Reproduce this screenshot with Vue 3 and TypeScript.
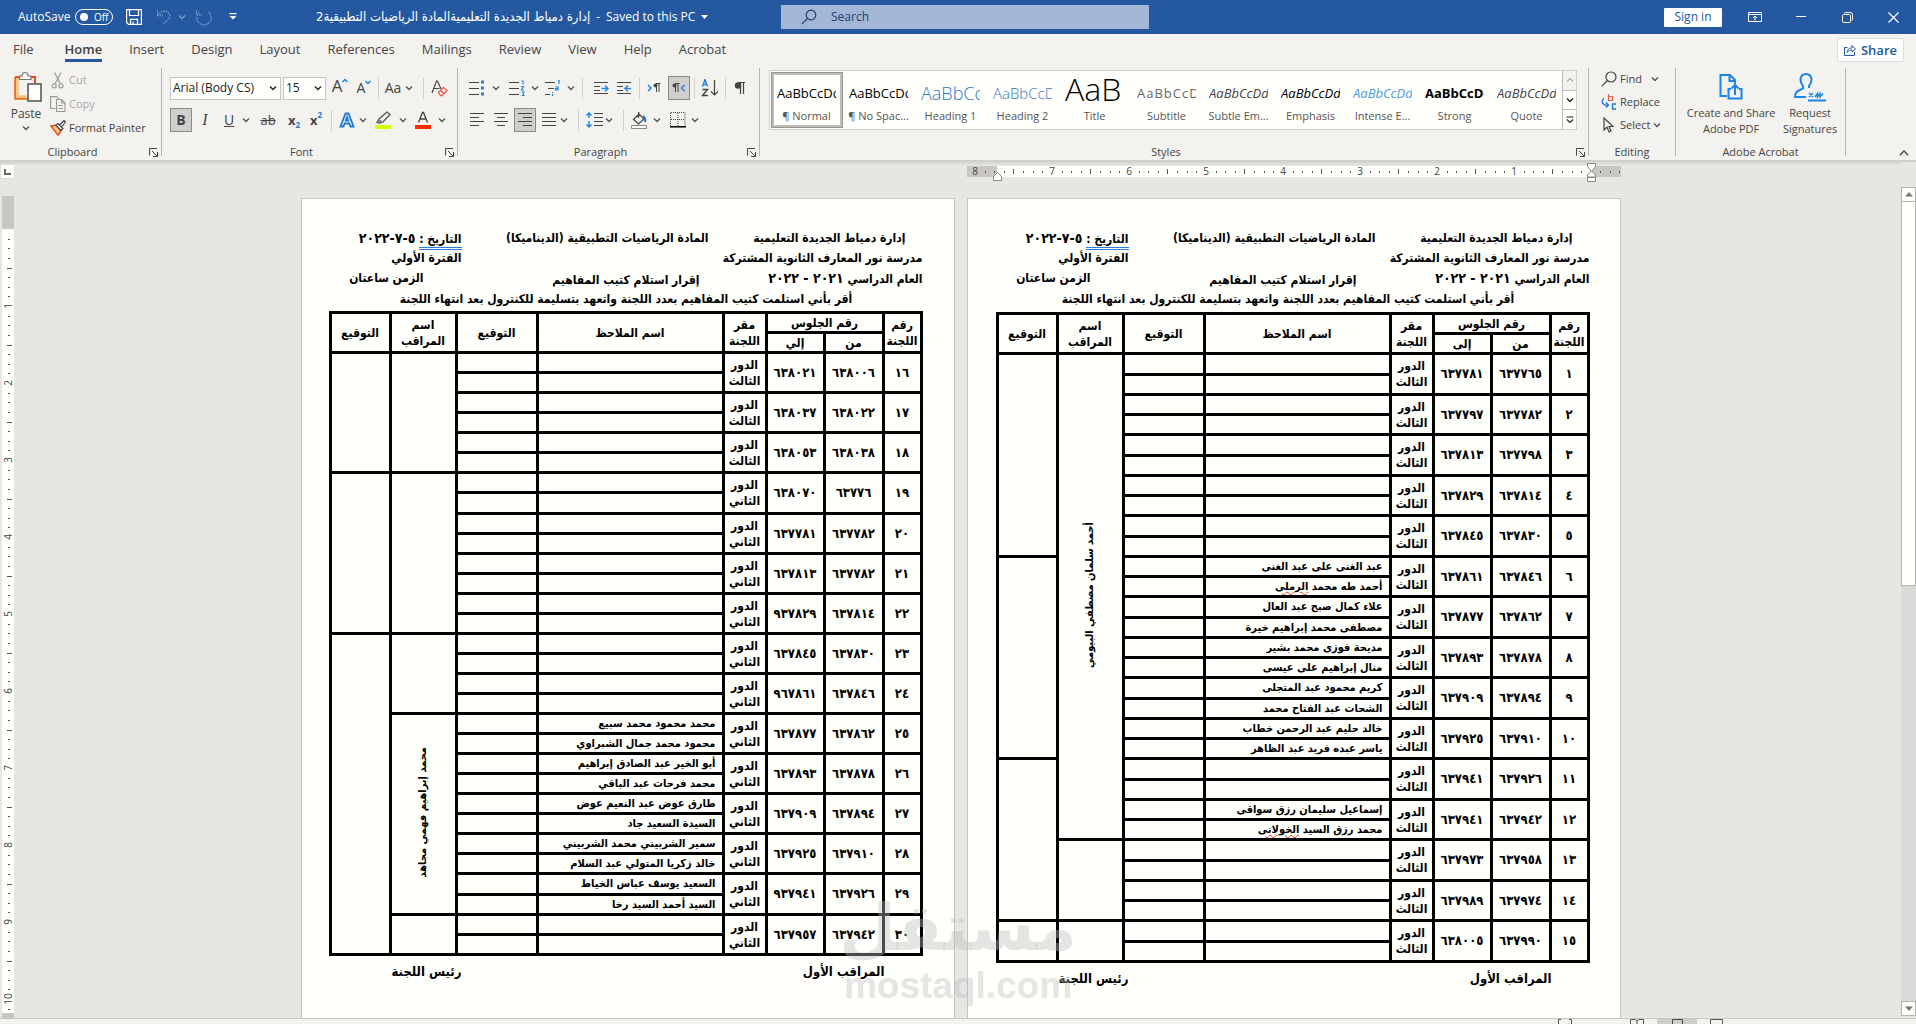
<script setup lang="ts">
interface Entry {
  no: number
  from: number
  to: number
  place: string
  names: [string, string]
  flagged?: string
}
interface Span {
  start: number
  rows: number
  label?: string
}
interface Sheet {
  id: string
  toLabel: string
  entries: Entry[]
  supervisors: Span[]
  signatures: Span[]
}

const THIRD = 'الثالث'
const SECOND = 'الثاني'

const entry = (no: number, from: number, to: number, place: string, a = '', b = '', flagged = ''): Entry => ({
  no, from, to, place, names: [a, b], flagged,
})

const sheets: Sheet[] = [
  {
    id: 'one',
    toLabel: 'إلى',
    entries: [
      entry(1, 637765, 637781, THIRD),
      entry(2, 637782, 637797, THIRD),
      entry(3, 637798, 637813, THIRD),
      entry(4, 637814, 637829, THIRD),
      entry(5, 637830, 637845, THIRD),
      entry(6, 637846, 637861, THIRD, 'عبد الغنى على عبد الغنى', 'أحمد طه محمد', 'الرملى'),
      entry(7, 637862, 637877, THIRD, 'علاء كمال صبح عبد العال', 'مصطفى محمد إبراهيم خيرة'),
      entry(8, 637878, 637893, THIRD, 'مديحة فوزى محمد بشير', 'منال إبراهيم على عيسى'),
      entry(9, 637894, 637909, THIRD, 'كريم محمود عبد المتجلى', 'الشحات عبد الفتاح محمد'),
      entry(10, 637910, 637925, THIRD, 'خالد حليم عبد الرحمن خطاب', 'ياسر عبده فريد عبد الظاهر'),
      entry(11, 637926, 637941, THIRD),
      entry(12, 637942, 637941, THIRD, 'إسماعيل سليمان رزق سواقى', 'محمد رزق السيد', 'الخولانى'),
      entry(13, 637958, 637973, THIRD),
      entry(14, 637974, 637989, THIRD),
      entry(15, 637990, 638005, THIRD),
    ],
    supervisors: [
      { start: 1, rows: 12, label: 'أحمد سلمان مصطفي البيومي' },
      { start: 13, rows: 2 },
      { start: 15, rows: 1 },
    ],
    signatures: [
      { start: 1, rows: 5 },
      { start: 6, rows: 5 },
      { start: 11, rows: 4 },
      { start: 15, rows: 1 },
    ],
  },
  {
    id: 'two',
    toLabel: 'إلي',
    entries: [
      entry(16, 638006, 638021, THIRD),
      entry(17, 638022, 638037, THIRD),
      entry(18, 638038, 638053, THIRD),
      entry(19, 63776, 638070, SECOND),
      entry(20, 637782, 637781, SECOND),
      entry(21, 637782, 637813, SECOND),
      entry(22, 637814, 937829, SECOND),
      entry(23, 637830, 637845, SECOND),
      entry(24, 637846, 967861, SECOND),
      entry(25, 637862, 637877, SECOND, 'محمد محمود محمد سبيع', 'محمود محمد جمال الشبراوي'),
      entry(26, 637878, 637893, SECOND, 'أبو الخير عبد الصادق إبراهيم', 'محمد فرحات عبد الباقي'),
      entry(27, 637894, 637909, SECOND, 'طارق عوض عبد النعيم عوض', 'السيدة السعيد جاد'),
      entry(28, 637910, 637925, SECOND, 'سمير الشربيني محمد الشربيني', 'خالد زكريا المتولي عبد السلام'),
      entry(29, 637926, 937941, SECOND, 'السعيد يوسف عباس الخياط', 'السيد أحمد السيد رخا'),
      entry(30, 637942, 637957, SECOND),
    ],
    supervisors: [
      { start: 16, rows: 3 },
      { start: 19, rows: 4 },
      { start: 23, rows: 2 },
      { start: 25, rows: 5, label: 'محمد إبراهيم فهمي مجاهد' },
      { start: 30, rows: 1 },
    ],
    signatures: [
      { start: 16, rows: 3 },
      { start: 19, rows: 4 },
      { start: 23, rows: 8 },
    ],
  },
]

const arabic = (n: number): string => String(n).replace(/\d/g, (d) => '٠١٢٣٤٥٦٧٨٩'[Number(d)])
const spanAt = (spans: Span[], no: number): Span | undefined => spans.find((s) => s.start === no)

const tabs: string[] = ['File', 'Home', 'Insert', 'Design', 'Layout', 'References', 'Mailings', 'Review', 'View', 'Help', 'Acrobat']

const styleItems: { name: string; sample: string; look: string }[] = [
  { name: '¶ Normal', sample: 'AaBbCcDd', look: 'plain' },
  { name: '¶ No Spac...', sample: 'AaBbCcDd', look: 'plain' },
  { name: 'Heading 1', sample: 'AaBbCc', look: 'h1' },
  { name: 'Heading 2', sample: 'AaBbCcD', look: 'h2' },
  { name: 'Title', sample: 'AaB', look: 'title' },
  { name: 'Subtitle', sample: 'AaBbCcD', look: 'sub' },
  { name: 'Subtle Em...', sample: 'AaBbCcDd', look: 'subtle' },
  { name: 'Emphasis', sample: 'AaBbCcDd', look: 'emph' },
  { name: 'Intense E...', sample: 'AaBbCcDd', look: 'intense' },
  { name: 'Strong', sample: 'AaBbCcDd', look: 'strong' },
  { name: 'Quote', sample: 'AaBbCcDd', look: 'subtle' },
]

/* Rulers: one inch is 77px, with a tick at every eighth. */
const INCH = 77
interface Tick { at: number; kind: 'dot' | 'half' | 'num'; label: string }
const makeTicks = (eighths: number): Tick[] =>
  Array.from({ length: eighths }, (_, i) => {
    const k = i + 1
    return {
      at: Math.round((k * INCH) / 8),
      kind: k % 8 === 0 ? 'num' : k % 4 === 0 ? 'half' : 'dot',
      label: String(k / 8),
    }
  })
const hTicks = makeTicks(64)
const vTicks = makeTicks(81)
</script>

<template>
  <div class="app">
    <svg class="defs" aria-hidden="true">
      <symbol id="chev" viewBox="0 0 8 8"><path d="M1 2.5 4 5.5 7 2.5" fill="none" stroke="currentColor" stroke-width="1.4" /></symbol>
      <symbol id="launch" viewBox="0 0 9 9"><path d="M.5 7.500V.5H8M3 3l5 5M8.500 4v4.500H4" fill="none" stroke="currentColor" /></symbol>
    </svg>

    <header class="titlebar">
      <div class="tb-left">
        <label class="autosave" for="autosave">AutoSave</label>
        <span class="toggle"><input id="autosave" type="checkbox" /><i></i><span>Off</span></span>
        <button class="tb-btn save" aria-label="Save">
          <svg width="16" height="16" viewBox="0 0 16 16" fill="none" stroke="#fff" stroke-width="1.2"><path d="M.6.6h14.800v14.800H2.600L.6 13.400zM3.500.6v5.900h9V.6M4.500 15.400v-5h7v5M7 15v-2.500" /></svg>
        </button>
        <button class="tb-btn undo" aria-label="Undo">
          <svg width="16" height="16" viewBox="0 0 16 16" fill="none" stroke="#7f9ccb" stroke-width="1.3" stroke-dasharray="1.500 1"><path d="M1.500 1v5.500H7M1.500 6.500C5 2 9 1 12 3.500s2 6-1 8L7.500 15" /></svg>
          <svg class="chev faint"><use href="#chev" /></svg>
        </button>
        <button class="tb-btn redo" aria-label="Repeat">
          <svg width="18" height="17" viewBox="0 0 18 17" fill="none" stroke="#7f9ccb" stroke-width="1.300" stroke-dasharray="1.500 1"><path d="M1.500 1v5H7M4 3.500A7.200 7.200 0 1 0 13.500 3" /></svg>
        </button>
        <button class="tb-btn custom" aria-label="Customize Quick Access Toolbar">
          <svg width="8" height="8" viewBox="0 0 8 8" fill="#fff"><path d="M.5 0h7v1.200h-7zM.5 3h7L4 6.500z" /></svg>
        </button>
      </div>
      <div class="doc-title">
        <bdi class="doc-name" dir="rtl" lang="ar">إدارة دمياط الجديدة التعليميةالمادة الرياضيات التطبيقية2</bdi>
        <span>-</span>
        <span>Saved to this PC</span>
        <svg width="7" height="5" viewBox="0 0 7 5" fill="#fff"><path d="M0 0h7L3.500 4z" /></svg>
      </div>
      <label class="search">
        <svg width="16" height="16" viewBox="0 0 16 16" fill="none" stroke="#1e3f75" stroke-width="1.200"><circle cx="10" cy="6" r="4.800" /><path d="M6.500 9.500.8 15.200" /></svg>
        <input type="text" placeholder="Search" aria-label="Search" />
      </label>
      <div class="tb-right">
        <button class="signin">Sign in</button>
        <button class="win" aria-label="Ribbon Display Options">
          <svg width="14" height="12" viewBox="0 0 14 12" fill="none" stroke="#fff"><path d="M.5 1.500h13v9H.5zM.5 3.500h13M7 9.500V5M5 7l2-2 2 2" /></svg>
        </button>
        <button class="win" aria-label="Minimize"><svg width="12" height="12" viewBox="0 0 12 12" stroke="#fff"><path d="M1 5.500h10" /></svg></button>
        <button class="win" aria-label="Restore Down">
          <svg width="11" height="11" viewBox="0 0 11 11" fill="none" stroke="#fff"><rect x=".5" y="2.500" width="8" height="8" rx="1" /><path d="M2.500 2V1.500q0-1 1-1h5q2 0 2 2v5q0 1-1 1" /></svg>
        </button>
        <button class="win" aria-label="Close"><svg width="11" height="11" viewBox="0 0 11 11" stroke="#fff" stroke-width="1.200"><path d="m.5.5 10 10m0-10-10 10" /></svg></button>
      </div>
    </header>

    <nav class="tabs">
      <a v-for="t in tabs" :key="t" href="#" :class="{ on: t === 'Home' }">{{ t }}</a>
      <button class="share">
        <svg width="12" height="12" viewBox="0 0 12 12" fill="none" stroke="#2458a0"><path d="M3.500 3.500h-3v8h10V8M3 8.500C3.500 5 5.500 4 8 4V1.500L11.500 5 8 8V6C6 6 4.500 6.500 3 8.500z" /></svg>
        Share
      </button>
    </nav>

    <section class="ribbon">
      <div class="group clipboard">
        <div class="body clip-body">
          <button class="big paste">
            <svg width="28" height="32" viewBox="0 0 28 32" fill="none"><path d="M1.200 6v21.800h12" stroke="#e8701a" stroke-width="2" /><path d="M3.500 7v18.500h9" stroke="#f6c278" stroke-width="2.500" /><path d="M1 6h6M15 6h6v6" stroke="#e8501a" stroke-width="2" /><path d="M5.500 8.500V5H8q0-3.500 3-3.500T14 5h3v3.500z" fill="#f8f8f5" stroke="#777" stroke-width="1.200" /><rect x="14" y="13" width="13" height="17" fill="#fffefb" stroke="#444" stroke-width="1.400" /></svg>
            <span>Paste</span>
            <svg class="chev"><use href="#chev" /></svg>
          </button>
          <div class="clip-list">
            <button class="off">
              <svg width="16" height="17" viewBox="0 0 16 17" fill="none" stroke="#a3a19e" stroke-width="1.300"><path d="M4.500.5 10.500 12M11 .5 5 12" /><circle cx="4.200" cy="13.800" r="2" /><circle cx="11" cy="13.800" r="2" /></svg>Cut
            </button>
            <button class="off">
              <svg width="16" height="16" viewBox="0 0 16 16" fill="none" stroke="#9a9895" stroke-width="1.100"><path d="M5.500 12.500H.6V.6h6l2.500 2.500M6.500 3.500h5l3.500 3.500v8.500H6.500zM11.500 3.500V7H15M8.500 9.500H13M8.500 12.500H13" /></svg>Copy
            </button>
            <button>
              <svg width="16" height="16" viewBox="0 0 16 16" fill="none"><path d="m1 6 5-1 5 6-3 4z" fill="#fbc98c" stroke="#e8501a" stroke-width="1.500" /><path d="m6 5.500 2-2 5 5-2 2zM9.500 5l4.500-4.500 1.500 1.500L11.500 7" fill="#f3f2ee" stroke="#444" stroke-width="1.200" /></svg>Format Painter
            </button>
          </div>
        </div>
        <div class="label"><span>Clipboard</span><button class="launch" aria-label="Clipboard settings"><svg><use href="#launch" /></svg></button></div>
      </div>

      <div class="group font">
        <div class="body rows">
          <div class="row f1">
            <div class="combo"><input type="text" value="Arial (Body CS)" aria-label="Font" /><svg class="chev dark"><use href="#chev" /></svg></div>
            <div class="combo"><input type="text" value="15" aria-label="Font size" /><svg class="chev dark"><use href="#chev" /></svg></div>
            <button class="grow" aria-label="Grow Font"><span>A</span><svg width="6" height="5" viewBox="0 0 6 5"><path d="M.5 4 3 1.500 5.500 4" /></svg></button>
            <button class="grow shrink" aria-label="Shrink Font"><span>A</span><svg width="6" height="5" viewBox="0 0 6 5"><path d="M.5 1 3 3.500 5.500 1" /></svg></button>
            <i class="sep"></i>
            <button class="glyph">Aa</button>
            <svg class="chev"><use href="#chev" /></svg>
            <i class="sep"></i>
            <button aria-label="Clear All Formatting"><svg width="17" height="17" viewBox="0 0 17 17" fill="none"><path d="M1 13 5.500 1h1L10 9M3 8.500h5.500" stroke="#444" stroke-width="1.200" /><path d="m7.500 12.500 5-5 3.500 3-5 5h-1.500zM9.500 10.500l3.500 3" stroke="#e0614a" stroke-width="1.300" /></svg></button>
          </div>
          <div class="row f2">
            <button class="glyph pressed"><b>B</b></button>
            <button class="glyph serif"><i>I</i></button>
            <button class="glyph"><u>U</u></button>
            <svg class="chev"><use href="#chev" /></svg>
            <button class="glyph small"><s>ab</s></button>
            <button class="glyph small"><b>x</b><sub>2</sub></button>
            <button class="glyph small"><b>x</b><sup>2</sup></button>
            <i class="sep"></i>
            <button aria-label="Text Effects"><svg width="16" height="16" viewBox="0 0 16 16" fill="none"><path d="m1.500 14.500 5-13h3l5 13h-3l-1.200-3H5.700l-1.200 3zM6.800 8.500h2.400L8 5z" stroke="#1a78d8" stroke-width="1.800" /></svg></button>
            <svg class="chev"><use href="#chev" /></svg>
            <button aria-label="Text Highlight Color"><svg width="18" height="18" viewBox="0 0 18 18" fill="none"><path d="M3 11.500 5 8l8-7 3 2.500-7 7.500-3.500 1z" stroke="#555" stroke-width="1.300" /><path d="m5 8 4 3-3.500 1.500L3 11.500z" fill="#777" /><path d="M1 14h16v4H1z" fill="#d2ff00" /></svg></button>
            <svg class="chev"><use href="#chev" /></svg>
            <button aria-label="Font Color"><svg width="18" height="18" viewBox="0 0 18 18" fill="none"><path d="m4.500 11.500 4-10h1l4 10M6 8h6" stroke="#444" stroke-width="1.300" /><path d="M1 14h16v4H1z" fill="#ff2a00" /></svg></button>
            <svg class="chev"><use href="#chev" /></svg>
          </div>
        </div>
        <div class="label"><span>Font</span><button class="launch" aria-label="Font settings"><svg><use href="#launch" /></svg></button></div>
      </div>

      <div class="group paragraph">
        <div class="body rows">
          <div class="row p1">
            <button aria-label="Bullets"><svg width="16" height="16" viewBox="0 0 16 16"><path d="M0 2.500h10M0 8.500h10M0 14.500h10" stroke="#444" /><path d="M12 .5h3v3h-3zM12 6.500h3v3h-3zM12 12.500h3v3h-3z" fill="#1a86e8" /></svg></button>
            <svg class="chev"><use href="#chev" /></svg>
            <button aria-label="Numbering"><svg width="16" height="16" viewBox="0 0 16 16" fill="none"><path d="M0 2.500h10M0 8.500h10M0 14.500h10" stroke="#444" /><path d="M12.500 1H14v3.500M12 6.500h2.500L12.500 10H15M12.500 12H15l-1 1.500 1 2h-2.500" stroke="#1a86e8" stroke-width="1.100" /></svg></button>
            <svg class="chev"><use href="#chev" /></svg>
            <button aria-label="Multilevel List"><svg width="16" height="16" viewBox="0 0 16 16" fill="none"><path d="M0 2.500h10M3 8.500h6M0 14.500h5" stroke="#444" /><path d="M13 .5h1V4M10.500 7h2.500v3h-2.500V8.500H13M7.500 12v1M7.500 14v2.500" stroke="#1a86e8" stroke-width="1.200" /></svg></button>
            <svg class="chev"><use href="#chev" /></svg>
            <i class="sep"></i>
            <button aria-label="Decrease Indent"><svg width="16" height="14" viewBox="0 0 16 14" fill="none"><path d="M1 1.500h14M1 5.500h6M1 9.500h6M1 12.500h14" stroke="#444" /><path d="M8.500 7.500h6M12 4.500l3 3-3 3" stroke="#1a86e8" stroke-width="1.400" /></svg></button>
            <button aria-label="Increase Indent"><svg width="16" height="14" viewBox="0 0 16 14" fill="none"><path d="M1 1.500h14M1 5.500h6M1 9.500h6M1 12.500h14" stroke="#444" /><path d="M9 7.500h6M12 4.500l-3 3 3 3" stroke="#1a86e8" stroke-width="1.400" /></svg></button>
            <i class="sep"></i>
            <button aria-label="Left-to-Right"><svg width="14" height="12" viewBox="0 0 14 12" fill="none"><path d="m1 3 3 3-3 3" stroke="#1a86e8" stroke-width="1.500" /><path d="M9 1.500h4.500M9.500 1.500V10M12 1.500V10" stroke="#444" /><circle cx="8.500" cy="3.500" r="2" fill="#444" /></svg></button>
            <button class="pressed" aria-label="Right-to-Left"><svg width="14" height="12" viewBox="0 0 14 12" fill="none"><path d="m12.500 3-3 3 3 3" stroke="#1a86e8" stroke-width="1.500" /><path d="M3 1.500h4.500M3.500 1.500V10M6 1.500V10" stroke="#444" /><circle cx="2.500" cy="3.500" r="2" fill="#444" /></svg></button>
            <i class="sep"></i>
            <button aria-label="Sort"><svg width="18" height="18" viewBox="0 0 18 18" fill="none"><path d="m1.500 7.500 2.500-7 2.500 7M2.500 5.500h3" stroke="#1a86e8" stroke-width="1.400" /><path d="M1.500 10.500h5l-5 6h5.500" stroke="#444" stroke-width="1.400" /><path d="M13.500 1v15M10 12.500l3.500 3.500 3.500-3.500" stroke="#444" stroke-width="1.200" /></svg></button>
            <i class="sep"></i>
            <button aria-label="Show marks"><svg width="12" height="14" viewBox="0 0 12 14" fill="none"><path d="M4 1.500h7M6.500 1.500V13M9.500 1.500V13" stroke="#444" stroke-width="1.200" /><circle cx="4" cy="4.500" r="3.200" fill="#444" /></svg></button>
          </div>
          <div class="row p2">
            <button aria-label="Align Left"><svg width="14" height="14" viewBox="0 0 14 14" stroke="#444"><path d="M0 .5h14M0 4.500h9M0 8.500h14M0 12.500h9" /></svg></button>
            <button aria-label="Center"><svg width="14" height="14" viewBox="0 0 14 14" stroke="#444"><path d="M0 .5h14M3 4.500h8M0 8.500h14M3 12.500h8" /></svg></button>
            <button class="pressed" aria-label="Align Right"><svg width="14" height="14" viewBox="0 0 14 14" stroke="#444"><path d="M0 .5h14M5 4.500h9M0 8.500h14M5 12.500h9" /></svg></button>
            <button aria-label="Justify"><svg width="14" height="14" viewBox="0 0 14 14" stroke="#444"><path d="M0 .5h14M0 4.500h14M0 8.500h14M0 12.500h14" /></svg></button>
            <svg class="chev"><use href="#chev" /></svg>
            <i class="sep"></i>
            <button aria-label="Line Spacing"><svg width="17" height="16" viewBox="0 0 17 16" fill="none"><path d="M8 1.500h9M8 5.500h9M8 9.500h9M8 13.500h9" stroke="#444" /><path d="M3 1v5M3 9v6M.5 3.500 3 1l2.500 2.500M.5 12.500 3 15l2.500-2.500" stroke="#1a86e8" stroke-width="1.400" /></svg></button>
            <svg class="chev"><use href="#chev" /></svg>
            <i class="sep"></i>
            <button aria-label="Shading"><svg width="18" height="17" viewBox="0 0 18 17" fill="none"><path d="M3.500 7.500 9 2l5 5-5.500 5zM8.500 6V1q0-1 1-1" stroke="#444" stroke-width="1.200" /><path d="M13 4q3 2 2 6" stroke="#1a78d8" stroke-width="2" /><path d="M1.500 13.500h15v3h-15z" fill="#fff" stroke="#888" /></svg></button>
            <svg class="chev"><use href="#chev" /></svg>
            <button aria-label="Borders"><svg width="16" height="16" viewBox="0 0 16 16" fill="none"><path d="M.5 14V.5h14.500V14M8 1v13M1 7.500h14" stroke="#444" stroke-dasharray="1 1" /><path d="M0 14.800h16" stroke="#000" stroke-width="1.500" /></svg></button>
            <svg class="chev"><use href="#chev" /></svg>
          </div>
        </div>
        <div class="label"><span>Paragraph</span><button class="launch" aria-label="Paragraph settings"><svg><use href="#launch" /></svg></button></div>
      </div>

      <div class="group styles">
        <div class="body">
          <div class="gallery">
            <div class="gallery-items">
              <button v-for="(s, i) in styleItems" :key="s.name" class="style-item" :class="{ chosen: i === 0 }">
                <span class="sample" :class="s.look">{{ s.sample }}</span>
                <span class="style-name">{{ s.name }}</span>
              </button>
            </div>
            <div class="gallery-nav">
              <button class="dim" aria-label="Previous styles"><svg class="chev up"><use href="#chev" /></svg></button>
              <button aria-label="Next styles"><svg class="chev dark"><use href="#chev" /></svg></button>
              <button aria-label="More styles"><svg width="8" height="8" viewBox="0 0 8 8" fill="none" stroke="#222" stroke-width="1.200"><path d="M.5 1h7M1 3.500 4 6.500 7 3.500" /></svg></button>
            </div>
          </div>
        </div>
        <div class="label"><span>Styles</span><button class="launch" aria-label="Styles settings"><svg><use href="#launch" /></svg></button></div>
      </div>

      <div class="group editing">
        <div class="body edit-list">
          <button><svg width="16" height="16" viewBox="0 0 16 16" fill="none" stroke="#444" stroke-width="1.200"><circle cx="10" cy="6" r="5" /><path d="M6.500 9.500.8 15.200" /></svg>Find<svg class="chev far"><use href="#chev" /></svg></button>
          <button><svg width="16" height="16" viewBox="0 0 16 16" fill="none"><path d="M7.500 0v6.500h4v-4h-4" stroke="#e0614a" stroke-width="1.200" /><path d="M3 4.500Q0 7 2 9.500T7 11M5 8.500 7.500 11 5 13.500M15 10h-3.500v5H15" stroke="#1a78d8" stroke-width="1.300" /></svg>Replace</button>
          <button><svg width="16" height="16" viewBox="0 0 16 16" fill="none" stroke="#444" stroke-width="1.200"><path d="M3 1v12l3-3 2 5 2-1-2-4.500h4z" /></svg>Select<svg class="chev"><use href="#chev" /></svg></button>
        </div>
        <div class="label"><span>Editing</span></div>
      </div>

      <div class="group acrobat">
        <div class="body acro-body">
          <button class="big">
            <svg width="24" height="28" viewBox="0 0 24 28" fill="none" stroke="#1a86e8" stroke-width="2"><path d="M8 23H1.500V2H11l5 5v4M10.500 2v6H16M12 16h-2.500v9.500h13V16H20M16 22v-9M12.500 15.500 16 12l3.500 3.500" /></svg>
            <span>Create and Share<br />Adobe PDF</span>
          </button>
          <button class="big">
            <svg width="32" height="30" viewBox="0 0 32 30" fill="none" stroke="#1a86e8" stroke-width="2"><path d="M12 25H1q0-5 4-6.500l4-2v-2.500Q6.500 11 6.500 7.500 7 2 12 2t5.500 5.500q0 3.500-2.500 6.500v2M14 28.500h18" /><path d="m15 21 4 4m0-4-4 4M21 25l2.500-3.500v3.500L26 21.500V25l3-3.500" stroke-width="1.500" /></svg>
            <span>Request<br />Signatures</span>
          </button>
        </div>
        <div class="label"><span>Adobe Acrobat</span></div>
      </div>
      <div class="ribbon-end">
        <button aria-label="Collapse the Ribbon"><svg width="10" height="6" viewBox="0 0 10 6" fill="none" stroke="#444" stroke-width="1.300"><path d="M.8 5.200 5 1l4.200 4.200" /></svg></button>
      </div>
    </section>

    <main class="workspace">
      <aside class="left-rail">
        <button class="tab-kind" aria-label="Tab selector"><svg width="7" height="6" viewBox="0 0 7 6"><path d="M1 0v5h6" fill="none" stroke="#666" stroke-width="2" /></svg></button>
        <svg class="v-ruler" width="12" height="823">
          <rect width="12" height="33" fill="#c8c7c3" /><rect y="33" width="12" height="784" fill="#fffffc" /><rect y="817" width="12" height="6" fill="#c8c7c3" />
          <template v-for="t in vTicks" :key="t.at">
            <path v-if="t.kind !== 'num'" :d="t.kind === 'half' ? `M5 ${t.at + 33}.5h5` : `M6 ${t.at + 33}.5h2`" stroke="#555" />
            <text v-else :transform="`translate(10 ${t.at + 33}) rotate(-90)`" text-anchor="middle">{{ t.label }}</text>
          </template>
        </svg>
      </aside>

      <div class="canvas">
        <div class="ruler-line">
          <svg class="h-ruler" width="654" height="20">
            <rect y="4" width="654" height="11" fill="#c8c7c3" /><rect x="30" y="4" width="594" height="11" fill="#fffffc" />
            <template v-for="t in hTicks" :key="t.at">
              <path v-if="t.kind !== 'num'" :d="t.kind === 'half' ? `M${624 - t.at}.5 7v5` : `M${624 - t.at}.5 9v2`" stroke="#555" />
              <text v-else :x="624 - t.at" y="13" text-anchor="middle">{{ t.label }}</text>
            </template>
            <path d="M633.500 9v2M643.500 9v2M652.500 9v2" stroke="#555" />
            <g fill="#fff" stroke="#888"><path d="M26.500 18.500v-4l4-4 4 4v4zM620.500 1.500h8v3l-4 5-4-5zM620.500 15v-2l4-4 4 4v2zM620.500 15.500h8v4h-8z" /></g>
          </svg>
        </div>
        <div class="pages" dir="rtl" lang="ar">
          <article v-for="sheet in sheets" :key="sheet.id" class="page" :class="sheet.id">
            <div class="heading">
              <p class="in-a">إدارة دمياط الجديدة التعليمية</p>
              <p>المادة الرياضيات التطبيقية (الديناميكا)</p>
              <p><span class="grammar">التاريخ :</span> <span class="digits">٥-٧-٢٠٢٢</span></p>
              <p class="wide">مدرسة نور المعارف الثانوية المشتركة</p>
              <p>الفترة الأولي</p>
              <p>العام الدراسي <span class="digits">٢٠٢١ - ٢٠٢٢</span></p>
              <p class="receipt">إقرار استلام كتيب المفاهيم</p>
              <p class="in-c">الزمن ساعتان</p>
            </div>
            <p class="pledge">أقر بأني استلمت كتيب المفاهيم بعدد اللجنة واتعهد بتسليمة للكنترول بعد انتهاء اللجنة</p>
            <table>
              <colgroup><col class="c1" /><col class="c2" /><col class="c3" /><col class="c4" /><col class="c5" /><col class="c6" /><col class="c7" /><col class="c8" /></colgroup>
              <thead>
                <tr>
                  <th rowspan="2">رقم اللجنة</th>
                  <th colspan="2">رقم الجلوس</th>
                  <th rowspan="2">مقر اللجنة</th>
                  <th rowspan="2">اسم الملاحظ</th>
                  <th rowspan="2">التوقيع</th>
                  <th rowspan="2">اسم المراقب</th>
                  <th rowspan="2">التوقيع</th>
                </tr>
                <tr><th>من</th><th>{{ sheet.toLabel }}</th></tr>
              </thead>
              <tbody>
                <template v-for="e in sheet.entries" :key="e.no">
                  <tr>
                    <td class="digits" rowspan="2">{{ arabic(e.no) }}</td>
                    <td class="digits" rowspan="2">{{ arabic(e.from) }}</td>
                    <td class="digits" rowspan="2">{{ arabic(e.to) }}</td>
                    <td rowspan="2">الدور {{ e.place }}</td>
                    <td class="name">{{ e.names[0] }}</td>
                    <td></td>
                    <td v-if="spanAt(sheet.supervisors, e.no)" :rowspan="spanAt(sheet.supervisors, e.no)!.rows * 2">
                      <span class="upright">{{ spanAt(sheet.supervisors, e.no)!.label }}</span>
                    </td>
                    <td v-if="spanAt(sheet.signatures, e.no)" :rowspan="spanAt(sheet.signatures, e.no)!.rows * 2"></td>
                  </tr>
                  <tr>
                    <td class="name">{{ e.names[1] }} <span v-if="e.flagged" class="spelling">{{ e.flagged }}</span></td>
                    <td></td>
                  </tr>
                </template>
              </tbody>
            </table>
            <div class="signers"><span>المراقب الأول</span><span>رئيس اللجنة</span></div>
          </article>
        </div>
        <div class="watermark" aria-hidden="true"><span class="wm-ar" lang="ar">مستقل</span><span class="wm-en">mostaql.com</span></div>
      </div>

      <div class="scrollbar">
        <button aria-label="Scroll up"><svg width="8" height="5" viewBox="0 0 8 5" fill="#777"><path d="M0 4.500h8L4 0z" /></svg></button>
        <div class="thumb"></div>
        <div class="track"></div>
        <button aria-label="Scroll down"><svg width="8" height="5" viewBox="0 0 8 5" fill="#777"><path d="M0 .5h8L4 5z" /></svg></button>
      </div>
    </main>

    <footer class="status">
      <svg class="focus" width="14" height="5" viewBox="0 0 14 5" fill="none" stroke="#555"><path d="M.5 5V.5H3M11 .5h2.500V5" /></svg>
      <svg class="read" width="14" height="5" viewBox="0 0 14 5" fill="none" stroke="#555"><path d="M.5 5V.5h5L7 2 8.500.5h5V5M7 2v3" /></svg>
      <span class="current"><svg width="11" height="5" viewBox="0 0 11 5" fill="none" stroke="#444"><path d="M.5 5V.5h10V5" /></svg></span>
      <svg class="web" width="13" height="5" viewBox="0 0 13 5" fill="none" stroke="#555"><path d="M.5 5V.5h12V5" /></svg>
    </footer>
  </div>
</template>

<style>
body { margin: 0; overflow: hidden; }
</style>

<style scoped>
.app { height: 100vh; display: flex; flex-direction: column; overflow: hidden; background: #e6e6e2; color: #444; font: 12px/16px "Open Sans", "Noto Sans", sans-serif; }
.app *, .app *::before { box-sizing: border-box; }
.defs { position: absolute; width: 0; height: 0; }
button { font: inherit; color: inherit; background: none; border: 0; padding: 0; margin: 0; display: flex; align-items: center; justify-content: center; white-space: nowrap; }
input { font: inherit; color: inherit; border: 0; padding: 0; margin: 0; background: none; outline: 0; min-width: 0; }
p { margin: 0; }
svg { display: block; flex: none; }
.chev { width: 8px; height: 8px; color: #555; }
.chev.dark { color: #222; }
.chev.up { transform: rotate(180deg); color: #b5b3b0; }
.chev.faint { color: #7f9ccb; }

.titlebar { flex: none; height: 34px; display: grid; grid-template-columns: 316px 465px 368px 1fr; align-items: center; background: #2458a0; color: #fff; }
.titlebar > * { min-width: 0; }
.tb-left { display: flex; align-items: center; padding-left: 18px; }
.autosave { width: 57px; }
.toggle { position: relative; display: flex; align-items: center; width: 38px; height: 16px; border: 1px solid #fff; border-radius: 8px; font-size: 10px; line-height: 14px; }
.toggle input { position: absolute; inset: 0; opacity: 0; }
.toggle i { width: 8px; height: 8px; margin: 0 6px 0 4px; border-radius: 50%; background: #fff; }
.save { margin-left: 13px; }
.undo { margin-left: 14px; gap: 6px; }
.redo { margin-left: 9px; }
.custom { margin-left: 16px; }
.doc-title { display: flex; align-items: center; gap: 6px; white-space: nowrap; }
.doc-name { font: 13px/18px "DejaVu Sans Condensed", "DejaVu Sans", sans-serif; }
.search { display: flex; align-items: center; height: 24px; padding-left: 20px; gap: 14px; background: #a2b7d5; }
.search input { flex: 1; color: #1e3f75; }
.search input::placeholder { color: #1e3f75; opacity: 1; }
.tb-right { display: flex; align-items: center; justify-content: flex-end; }
.signin { width: 58px; height: 19px; margin-right: 10px; background: #fff; color: #2458a0; border-radius: 1px; }
.win { width: 46px; height: 34px; }

.tabs { flex: none; display: flex; align-items: flex-start; height: 34px; background: #f3f2ee; font-size: 13px; }
.tabs a { padding: 7px 14px 0 13px; color: #444; text-decoration: none; }
.tabs a:first-child { margin-right: 4px; }
.tabs a.on { font-weight: 600; padding: 7px 0 0; margin: 0 14px 0 13px; height: 28px; border-bottom: 3px solid #2458a0; }
.share { margin: 4px 12px 0 auto; width: 67px; height: 24px; gap: 5px; border: 1px solid #dddcd8; border-radius: 2px; background: #fff; color: #2458a0; font-weight: 600; }

.ribbon { flex: none; display: flex; height: 94px; background: #f3f2ee; border-bottom: 2px solid #d0cfcb; }
.group { flex: none; display: flex; flex-direction: column; height: 88px; border-right: 1px solid #b9b7b3; }
.body { flex: 1; min-height: 0; }
.label { display: flex; align-items: center; height: 12px; margin-bottom: -2px; line-height: 12px; font-size: 11px; }
.label span { flex: 1; text-align: center; }
.launch { width: 9px; height: 9px; margin: 0 3px 0 4px; }
.launch svg { width: 9px; height: 9px; }
.clipboard { width: 162px; }
.clip-body { display: flex; padding: 3px 0 0 8px; font-size: 11px; }
.big { flex-direction: column; justify-content: flex-start; text-align: center; }
.paste { width: 36px; font-size: 12px; }
.paste span { margin: 3px 0 2px; }
.paste > svg:first-child { margin-left: 4px; }
.clip-list { display: flex; flex-direction: column; margin: -3px 0 0 6px; }
.clip-list button { height: 24px; justify-content: flex-start; gap: 3px; }
.off { color: #a8a6a3; }
.font { width: 296px; }
.font .body { padding-left: 7px; }
.paragraph { width: 302px; }
.paragraph .body { padding-left: 5px; }
.rows { display: flex; flex-direction: column; gap: 8px; padding-top: 8px; }
.row { display: grid; height: 24px; align-items: center; justify-items: center; justify-content: start; }
.row button { height: 24px; }
.f1 { grid-template-columns: 113px 43px 28px 20px 8px 22px 10px 18px 14px; padding-left: 1px; }
.f2 { grid-template-columns: 24px 24px 24px 10px 34px 18px 26px 4px 28px 4px 36px 4px 36px 2px; }
.p1 { grid-template-columns: 28px 10px 32px 4px 32px 4px 18px 20px 26px 4px 26px 24px 6px 26px 4px 26px; }
.p2 { grid-template-columns: 28px 20px 28px 20px 10px 18px 14px 16px 12px 20px 16px 26px 8px; }
.sep { width: 1px; height: 21px; background: #d2d0cc; }
.combo { display: flex; align-items: center; justify-self: start; width: 111px; height: 23px; padding: 0 3px 0 2px; border: 1px solid #c6c5c1; background: #fffffc; color: #222; }
.combo + .combo { width: 43px; }
.combo input { flex: 1; width: 0; }
.row .pressed { width: 22px; border: 1px solid #8b8a87; background: #cfcecb; }
.glyph { font-size: 14px; }
.glyph.small { font-size: 13px; }
.serif { font-family: "Liberation Serif", serif; font-size: 16px; }
.glyph sub, .glyph sup { font-size: 8px; line-height: 8px; color: #1a78d8; font-weight: 700; vertical-align: baseline; }
.glyph sub { align-self: flex-end; margin-bottom: 3px; }
.glyph sup { align-self: flex-start; margin-top: 3px; }
.grow { font-size: 17px; align-items: flex-start; padding-top: 2px; }
.shrink { font-size: 14px; padding-top: 4px; }
.grow svg { fill: none; stroke: #1a86e8; stroke-width: 1.4; }

.styles { flex: 1; min-width: 0; }
.styles .body { padding: 2px 11px 0 9px; }
.gallery { display: flex; height: 60px; border: 1px solid #cfcecb; background: #fffffc; }
.gallery-items { flex: 1; display: flex; min-width: 0; overflow: hidden; padding: 1px; }
.style-item { flex: none; width: 72px; height: 56px; flex-direction: column; justify-content: flex-start; overflow: hidden; border: 3px solid transparent; padding: 3px 4px 0 3px; }
.style-item.chosen { border-color: #bdbcb9; outline: 1px solid #979693; outline-offset: -1px; }
.sample { display: block; width: 100%; height: 30px; line-height: 30px; overflow: hidden; text-align: left; color: #000; font-size: 13px; }
.sample.h1 { color: #2e78c8; font-size: 18px; font-weight: 300; }
.sample.h2 { color: #2e78c8; font-size: 15px; font-weight: 300; }
.sample.title { font-size: 32px; line-height: 22px; font-weight: 300; }
.sample.sub { color: #666; letter-spacing: 1px; }
.sample.subtle { color: #444; font-style: italic; }
.sample.emph { font-style: italic; }
.sample.intense { color: #4aa0e0; font-style: italic; }
.sample.strong { font-weight: 700; }
.style-name { line-height: 18px; color: #555; font-size: 11px; }
.gallery-nav { width: 14px; display: flex; flex-direction: column; border-left: 1px solid #bdbcb9; }
.gallery-nav button { flex: 1; border-bottom: 1px solid #bdbcb9; }
.gallery-nav button:last-child { border-bottom: 0; }
.dim { background: #f3f2ee; }

.editing { width: 87px; }
.edit-list { padding-left: 12px; margin-top: -1px; }
.edit-list button { height: 23px; justify-content: flex-start; gap: 3px; }
.far { margin-left: 6px; }
.acrobat { width: 170px; }
.acro-body { display: flex; justify-content: space-around; gap: 4px; padding: 4px 6px 0 9px; }
.acro-body, .edit-list { font-size: 11px; }
.acro-body .big { flex: none; }
.acro-body .big svg { height: 30px; }
.acro-body .big span { margin-top: 3px; }
.ribbon-end { flex: none; width: 70px; height: 88px; display: flex; align-items: flex-end; justify-content: flex-end; padding-right: 7px; }

.workspace { flex: 1; min-height: 0; display: flex; border-bottom: 1px solid #c6c6c3; box-shadow: inset 0 3px 2px -1px #d6d6d3; }
.left-rail { flex: none; width: 20px; padding-top: 2px; }
.tab-kind { width: 15px; height: 15px; margin-bottom: 17px; background: #fffffc; border: 1px solid #dcdbd8; }
.v-ruler { margin-left: 2px; }
.v-ruler text, .h-ruler text { font-size: 10px; fill: #444; }
.canvas { position: relative; flex: 1; min-width: 0; overflow: hidden; display: flex; flex-direction: column; align-items: center; }
.ruler-line { flex: none; width: 1320px; height: 36px; display: flex; justify-content: flex-end; }
.pages { flex: 1; min-height: 0; width: 1320px; display: flex; justify-content: space-between; }
.page { width: 654px; padding: 29px 31px 0 28px; border: 1px solid #c4c4c1; border-bottom: 0; background: #fffffc; color: #000; font: bold 12px/16px "DejaVu Sans Condensed", "DejaVu Sans", sans-serif; }
.page.one { padding-right: 30px; }
.heading { display: grid; grid-template-columns: 214px 247px 1fr; grid-auto-rows: 20px; line-height: 20px; white-space: nowrap; }
.heading .wide { grid-column: span 2; }
.heading .digits { font-size: 14px; }
.in-a { padding-right: 17px; }
.in-c { padding-right: 38px; }
.receipt { padding: 2px 9px 0 0; }
.one .receipt { padding-right: 19px; }
.pledge { height: 23px; line-height: 23px; text-align: center; white-space: nowrap; }
.one .pledge { padding: 0 9px 0 0; height: 24px; }
.grammar { border-bottom: 3px double #2a7de0; display: inline-block; line-height: 15px; }
table { width: 594px; table-layout: fixed; border-collapse: collapse; border: 3px solid #000; font-size: 12px; }
th, td { border: 3px solid #000; padding: 0; height: 20px; line-height: 16px; text-align: center; vertical-align: middle; }
td.digits { font-size: 13px; }
.one tbody tr:nth-child(4n + 1) { height: 21px; }
.two tbody tr:nth-child(19n + 8) { height: 21px; }
.c1 { width: 38px; }
.c2 { width: 59px; }
.c3 { width: 58px; }
.c4 { width: 43px; }
.c5 { width: 186px; }
.c6 { width: 81px; }
.c7 { width: 66px; }
.c8 { width: 60px; }
td.name { text-align: right; padding-right: 6px; white-space: nowrap; font-size: 11px; }
.spelling { text-decoration: underline wavy #e03a20 1px; }
.upright { display: inline-block; writing-mode: vertical-rl; transform: rotate(180deg); white-space: nowrap; font-size: 11px; }
.signers { display: flex; padding: 6px 38px 0 0; font-size: 13px; line-height: 20px; white-space: nowrap; }
.signers span:first-child { width: 423px; }
.watermark { position: absolute; left: 822px; bottom: 12px; width: 232px; display: flex; flex-direction: column; align-items: center; color: rgba(187, 187, 187, 0.4); font-weight: 700; pointer-events: none; }
.wm-ar { font: bold 65px/76px "DejaVu Sans", sans-serif; }
.wm-en { font: bold 37px/40px "Liberation Sans", sans-serif; }

.scrollbar { flex: none; width: 15px; padding: 25px 0 2px; display: flex; flex-direction: column; background: #e6e6e2; }
.scrollbar button { width: 15px; height: 15px; flex: none; background: #fffffc; border: 1px solid #b5b4b1; }
.thumb { flex: 12; background: #fffffc; border: 1px solid #b5b4b1; border-top: 0; }
.track { flex: 13; background: #dadad9; }
.status { flex: none; height: 5px; display: flex; justify-content: flex-end; align-items: flex-end; overflow: hidden; background: #f3f2ee; padding-right: 193px; }
.read { margin: 0 13px 0 58px; }
.current { width: 40px; display: flex; justify-content: center; background: #cfcecb; }
.web { margin-left: 13px; }
</style>
